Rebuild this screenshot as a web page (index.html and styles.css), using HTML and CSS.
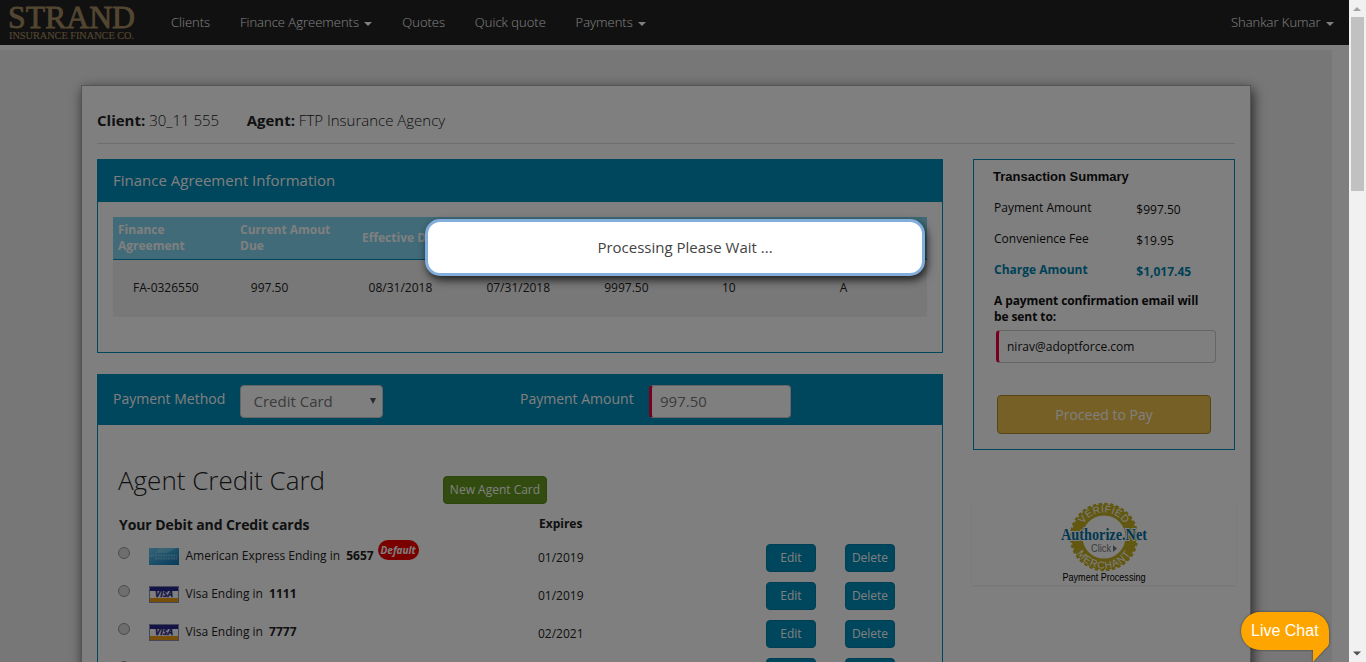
FILE: index.html
```html
<!DOCTYPE html>
<html lang="en">
<head>
<meta charset="utf-8">
<title>Strand Insurance Finance Co.</title>
<link rel="stylesheet" href="styles.css">
</head>
<body>
<div class="window">
  <div class="page">
    <nav class="navbar">
      <svg class="logo" width="140" height="45" viewBox="0 0 140 45">
        <text class="word" x="8" y="28" font-size="32" textLength="127" lengthAdjust="spacingAndGlyphs">STRAND</text>
        <text x="9" y="39" font-size="10" textLength="125" lengthAdjust="spacingAndGlyphs">INSURANCE FINANCE CO.</text>
      </svg>
      <a class="nav-link">Clients</a>
      <a class="nav-link">Finance Agreements<i class="caret"></i></a>
      <a class="nav-link">Quotes</a>
      <a class="nav-link">Quick quote</a>
      <a class="nav-link">Payments<i class="caret"></i></a>
      <a class="nav-link user">Shankar Kumar<i class="caret"></i></a>
    </nav>
    <main class="backdrop">
      <section class="sheet">
        <header class="parties">
          <span class="party"><b>Client:</b> 30_11 555</span>
          <span class="party"><b>Agent:</b> FTP Insurance Agency</span>
        </header>
        <div class="columns">
          <div class="main-col">
            <div class="panel agreement">
              <h3 class="panel-title">Finance Agreement Information</h3>
              <div class="table">
                <div class="thead">
                  <span>Finance Agreement</span><span>Current Amout Due</span><span>Effective Date</span>
                </div>
                <div class="trow">
                  <span>FA-0326550</span><span>997.50</span><span>08/31/2018</span><span>07/31/2018</span><span>9997.50</span><span>10</span><span>A</span>
                </div>
              </div>
            </div>
            <div class="panel payment">
              <div class="pay-bar">
                <span class="pay-label method">Payment Method</span>
                <span class="field select">Credit Card<svg width="6" height="6" viewBox="0 0 6 6"><path d="M0 0H6L3 6Z"/></svg></span>
                <span class="pay-label amount">Payment Amount</span>
                <span class="field required money">997.50</span>
              </div>
              <div class="cards">
                <div class="cards-top"><h2>Agent Credit Card</h2><span class="btn green">New Agent Card</span></div>
                <div class="cards-head"><span class="yours">Your Debit and Credit cards</span><span class="expires">Expires</span></div>
                <div class="card-row">
                  <i class="radio"></i>
                  <svg class="brand" width="30" height="17" viewBox="0 0 30 17">
                    <defs><linearGradient id="amex" x1="0" y1="0" x2="1" y2="1"><stop offset="0" stop-color="#68c7ef"/><stop offset=".45" stop-color="#3aa5d8"/><stop offset="1" stop-color="#1272b4"/></linearGradient></defs>
                    <rect width="30" height="17" fill="url(#amex)"/><path d="M10 0H28L18 5H6Z" fill="#9bddf5" opacity=".45"/>
                    <path d="M1 7.500H28M6 10.500H28" stroke="#a8dcf0" stroke-width="1.800" stroke-dasharray="2 .6" opacity=".5"/>
                  </svg>
                  <span class="name">American Express Ending in <b>5657</b><em class="default">Default</em></span>
                  <span class="date">01/2019</span><span class="btn teal">Edit</span><span class="btn teal">Delete</span>
                </div>
                <div class="card-row">
                  <i class="radio"></i>
                  <svg class="brand" width="30" height="17" viewBox="0 0 30 17"><rect x=".5" y=".5" width="29" height="16" fill="#fff" stroke="#8d8db5"/><path d="M1 1H29V5H1Z" fill="#26268c"/><path d="M1 12H29V16H1Z" fill="#ef9f12"/><text class="visa" x="6" y="11.3" textLength="18" lengthAdjust="spacingAndGlyphs">VISA</text></svg>
                  <span class="name">Visa Ending in <b>1111</b></span>
                  <span class="date">01/2019</span><span class="btn teal">Edit</span><span class="btn teal">Delete</span>
                </div>
                <div class="card-row">
                  <i class="radio"></i>
                  <svg class="brand" width="30" height="17" viewBox="0 0 30 17"><rect x=".5" y=".5" width="29" height="16" fill="#fff" stroke="#8d8db5"/><path d="M1 1H29V5H1Z" fill="#26268c"/><path d="M1 12H29V16H1Z" fill="#ef9f12"/><text class="visa" x="6" y="11.3" textLength="18" lengthAdjust="spacingAndGlyphs">VISA</text></svg>
                  <span class="name">Visa Ending in <b>7777</b></span>
                  <span class="date">02/2021</span><span class="btn teal">Edit</span><span class="btn teal">Delete</span>
                </div>
                <div class="card-row">
                  <i class="radio"></i><span class="brand-gap"></span><span class="name"></span><span class="date"></span><span class="btn teal"></span><span class="btn teal"></span>
                </div>
              </div>
            </div>
          </div>
          <aside class="side-col">
            <div class="summary">
              <h4>Transaction Summary</h4>
              <div class="line"><span>Payment Amount</span><span class="sum">$997.50</span></div>
              <div class="line"><span>Convenience Fee</span><span class="sum">$19.95</span></div>
              <div class="line total"><span>Charge Amount</span><span class="sum">$1,017.45</span></div>
              <p class="confirm">A payment confirmation email will<br>be sent to:</p>
              <span class="email required">nirav@adoptforce.com</span>
              <span class="proceed">Proceed to Pay</span>
            </div>
            <div class="seal">
              <svg width="92" height="84" viewBox="0 0 92 84">
                <defs><path id="top-arc" d="M21.500 37A24.500 24.500 0 0 1 70.500 37"/><path id="low-arc" d="M14.500 37A31.500 31.500 0 0 0 77.500 37"/></defs>
                <circle cx="46" cy="37" r="33" fill="none" stroke="#c4b024" stroke-width="2.500" stroke-dasharray="3.5 2.260"/>
                <circle cx="46" cy="37" r="27" fill="none" stroke="#c4b024" stroke-width="11"/>
                <text class="ring"><textPath href="#top-arc" startOffset="50%" text-anchor="middle">VERIFIED</textPath></text>
                <text class="ring wide"><textPath href="#low-arc" startOffset="50%" text-anchor="middle">MERCHANT</textPath></text>
                <text class="auth" x="3" y="40" textLength="86" lengthAdjust="spacingAndGlyphs">Authorize.Net</text>
                <text class="click" x="33" y="52" textLength="20" lengthAdjust="spacingAndGlyphs">Click</text>
                <path d="M55 45L59 48.500L55 52Z" fill="#777"/>
                <text class="processing" x="4.500" y="81" textLength="83" lengthAdjust="spacingAndGlyphs">Payment Processing</text>
              </svg>
            </div>
          </aside>
        </div>
      </section>
    </main>
    <div class="overlay"></div>
    <div class="dialog">Processing Please Wait ...</div>
    <div class="chat">
      <svg width="96" height="56" viewBox="0 0 96 56"><path d="M22 4H71A20 19 0 0 1 91 23V35Q91 38 87 41L75 54V42H22A19 19 0 0 1 22 4Z"/></svg>
      <span>Live Chat</span>
    </div>
  </div>
  <div class="scrollbar">
    <svg width="17" height="17"><path d="M4 11L8 7L12 11Z" fill="#a3a3a3"/></svg>
    <i class="thumb"></i>
    <svg class="down" width="17" height="17"><path d="M4 6.500H12L8 10.500Z" fill="#505050"/></svg>
  </div>
</div>
</body>
</html>
```
FILE: styles.css
```css
* { box-sizing: border-box; }
body { margin: 0; overflow: hidden; font-family: "Open Sans", sans-serif; font-size: 12px; color: #222; }
h2, h3, h4, p { margin: 0; }
.window { display: flex; height: 662px; overflow: hidden; }
.page { position: relative; width: 1349px; height: 662px; overflow: hidden; background: #fff; }

.navbar { display: flex; height: 45px; background: #222; }
.logo { margin-right: 31px; font-family: "Liberation Serif", serif; fill: #a88e62; stroke: #a88e62; stroke-width: .15px; }
.word { stroke-width: .8px; }
.nav-link { margin-right: 29.800px; line-height: 45px; font-size: 13px; font-weight: 300; color: #fff; white-space: nowrap; }
.nav-link.user { margin-left: auto; margin-right: 15px; }
.caret { display: inline-block; margin-left: 5.500px; vertical-align: middle; border: 4px solid transparent; border-top-color: #fff; border-bottom: 0; }

.backdrop { width: 1332px; height: 700px; margin-top: 5px; padding: 35px 0 0 81px; background: #efefef; }
.sheet { width: 1170px; height: 800px; padding: 0 15px; border: 1px solid #aaa; background: #fff; box-shadow: 2px 4px 12px rgba(0, 0, 0, .7); }
.parties { display: flex; gap: 27.500px; height: 58px; padding-top: 23px; border-bottom: 1px solid #ddd; font-size: 15px; line-height: 22px; font-weight: 300; }
.parties b { font-weight: 700; color: #222; }
.columns { display: flex; gap: 30px; margin-top: 15px; }
.main-col { width: 846px; }
.panel { border: 1px solid #008cb8; }
.agreement { height: 194px; margin-bottom: 21px; }
.panel-title { height: 42px; padding-left: 15px; background: #008cb8; color: #fff; font-size: 15px; font-weight: 400; line-height: 41px; }
.table { margin: 15px; }
.thead { display: flex; align-items: center; height: 43px; background: #82d6f0; border-bottom: 1px solid #008cb8; color: #fff; font-weight: 700; line-height: 16px; }
.thead span { width: 122px; padding: 0 5px; white-space: normal; }
.trow { display: flex; height: 57px; padding-left: 20px; background: #f0f0f0; line-height: 56px; }
.trow span { flex: 0 0 117.800px; }

.payment { height: 600px; }
.pay-bar { display: flex; height: 50px; padding: 10px 0 0 15px; background: #008cb8; }
.pay-label { font-size: 14px; line-height: 28px; color: #fff; white-space: nowrap; }
.method { width: 127px; }
.amount { width: 129px; margin-left: 137px; }
.field { height: 33px; border: 1px solid #ccc; border-radius: 4px; background: #fff; color: #777; font-size: 15px; line-height: 31px; }
.select { display: flex; justify-content: space-between; width: 143px; padding: 0 6px 0 12.500px; }
.select svg { margin-top: 12px; fill: #555; }
.required { border-left: 3px solid #f0003c; }
.money { width: 142px; padding-left: 8px; }

.cards-top { display: flex; align-items: flex-start; height: 89px; padding: 36px 0 0 20px; }
.cards-top h2 { width: 325px; font-size: 26px; line-height: 38px; font-weight: 300; }
.btn { flex: none; height: 28px; border: 1px solid; border-radius: 4px; color: #fff; font-size: 12px; line-height: 26px; text-align: center; white-space: nowrap; }
.green { width: 104px; margin-top: 15px; background: #62981c; border-color: #588a18; }
.cards-head { display: flex; height: 25px; padding-left: 21px; line-height: 21px; font-weight: 700; color: #222; }
.yours { width: 420px; font-size: 14px; letter-spacing: -.08px; }
.expires { line-height: 19px; font-size: 12px; }
.card-row { display: flex; height: 38px; padding: 5px 0 0 20px; }
.radio { flex: none; width: 12px; height: 12px; margin: 3px 19px 0 0; border: 1px solid #999; border-radius: 50%; background: #ddd; }
.brand { flex: none; margin-top: 4px; }
.brand-gap { flex: 0 0 30px; }
.visa { font: italic 700 8px "Open Sans", sans-serif; fill: #26268c; stroke: #26268c; stroke-width: .3px; }
.name { display: flex; flex: 0 0 359px; padding-left: 6.500px; line-height: 23px; white-space: pre; }
.name b { margin-left: 3px; font-weight: 700; color: #222; }
.default { width: 41px; height: 20px; margin: -4px 0 0 4px; border-radius: 10px; background: #f50000; color: #fff; font-size: 10px; font-weight: 700; line-height: 20px; text-align: center; }
.date { flex: 0 0 228px; line-height: 27px; }
.teal { width: 50px; margin-right: 29px; background: #008cb8; border-color: #007ca6; }

.side-col { width: 262px; }
.summary { height: 291px; padding: 5px 18px 0 19px; border: 1px solid #008cb8; color: #111; }
.summary h4 { height: 33px; font: 700 13px/24px "Liberation Sans", Arial, sans-serif; }
.line { display: flex; height: 31px; padding-left: 1px; line-height: 20px; }
.line span { width: 143px; white-space: nowrap; }
.line .sum { width: 80px; padding-top: 1.500px; }
.total { color: #0083ae; font-weight: 700; }
.confirm { padding: 2px 0 0 1px; font-weight: 700; line-height: 16px; white-space: nowrap; letter-spacing: -.1px; }
.email { display: block; width: 220px; height: 33px; margin: 5px 0 32px 3px; padding-left: 8px; border: 1px solid #ccc; border-left: 3px solid #f0003c; border-radius: 4px; line-height: 31px; }
.proceed { display: block; width: 214px; height: 39px; margin-left: 4px; border: 1px solid #ae8a30; border-radius: 4px; background: #eec04c; color: #fff; font-size: 14px; line-height: 38px; text-align: center; }
.seal { width: 264px; height: 85px; margin: 50px 0 0 -1px; padding-left: 86px; box-shadow: 0 1px 2px rgba(0, 0, 0, .1); }
.ring { font: 10px "Liberation Sans", sans-serif; letter-spacing: .4px; fill: #fff; }
.wide { letter-spacing: 1px; }
.auth { font: 700 16px "Liberation Serif", serif; fill: #006fa6; stroke: #fff; stroke-width: 2px; paint-order: stroke; }
.click { font: 10px "Liberation Sans", sans-serif; fill: #777; }
.processing { font: 10px "Liberation Sans", sans-serif; fill: #000; }

.overlay { position: absolute; inset: 0; background: rgba(0, 0, 0, .5); }
.dialog { position: absolute; left: 425px; top: 219px; width: 500px; height: 57px; padding-left: 20px; border: 3px solid #82aedc; border-radius: 15px; background: #fff; box-shadow: 2px 4px 9px rgba(0, 0, 0, .75); color: #444; font-size: 15px; line-height: 51px; text-align: center; }
.chat { position: absolute; left: 1238px; top: 608px; width: 96px; height: 54px; overflow: hidden; }
.chat svg { display: block; fill: #ffa500; filter: drop-shadow(0 0 1px rgba(0, 0, 0, .5)); }
.chat span { position: absolute; left: 13px; top: 12px; color: #fff; font: 16px/22px "Liberation Sans", Arial, sans-serif; white-space: nowrap; }
.scrollbar { display: flex; flex-direction: column; width: 17px; background: #f1f1f1; }
.thumb { width: 13px; height: 174px; margin-left: 2px; background: #c1c1c1; }
.down { margin-top: auto; }
```
